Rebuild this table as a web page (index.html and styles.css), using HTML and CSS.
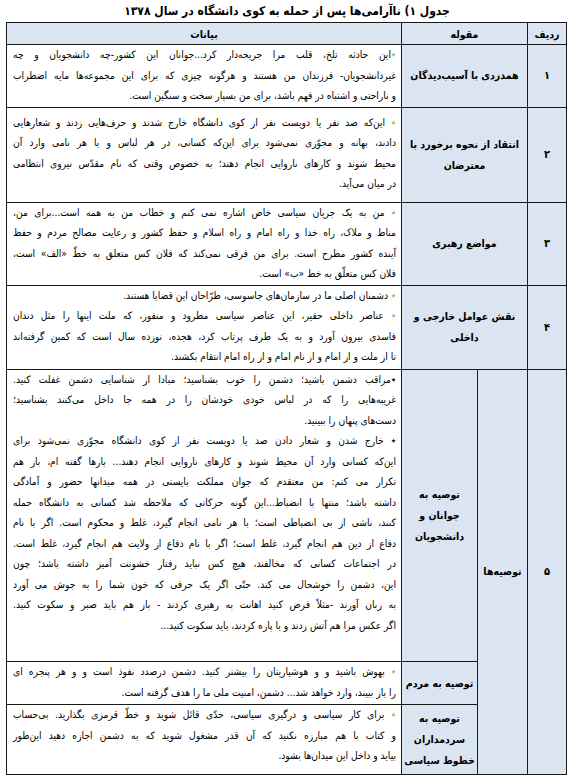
FILE: index.html
```html
<!DOCTYPE html>
<html lang="fa" dir="rtl">
<head>
<meta charset="utf-8">
<title>جدول ۱</title>
<link rel="stylesheet" href="styles.css">
</head>
<body>
<div class="page">
  <h1 class="title">جدول ۱) ناآرامی‌ها پس از حمله به کوی دانشگاه در سال ۱۳۷۸</h1>
  <table class="grid">
    <colgroup>
      <col class="c-num">
      <col class="c-cat">
      <col class="c-sub">
      <col class="c-text">
    </colgroup>
    <thead>
      <tr class="head">
        <th>ردیف</th>
        <th colspan="2">مقوله</th>
        <th>بیانات</th>
      </tr>
    </thead>
    <tbody>
      <tr>
        <td class="num">۱</td>
        <td class="cat" colspan="2">همدردی با آسیب‌دیدگان</td>
        <td class="txt">
          <span class="ln"><span class="star">٭</span>این حادثه تلخ، قلب مرا جریحه‌دار کرد...جوانان این کشور-چه دانشجویان و چه</span>
          <span class="ln">غیردانشجویان- فرزندان من هستند و هرگونه چیزی که برای این مجموعه‌ها مایه اضطراب</span>
          <span class="ln end">و ناراحتی و اشتباه در فهم باشد، برای من بسیار سخت و سنگین است.</span>
        </td>
      </tr>
      <tr>
        <td class="num">۲</td>
        <td class="cat" colspan="2">انتقاد از نحوه برخورد با<br>معترضان</td>
        <td class="txt pad2">
          <span class="ln"><span class="star">٭</span> این‌که صد نفر یا دویست نفر از کوی دانشگاه خارج شدند و حرف‌هایی زدند و شعارهایی</span>
          <span class="ln">دادند، بهانه و مجوّزی نمی‌شود برای این‌که کسانی، در هر لباس و با هر نامی وارد آن</span>
          <span class="ln">محیط شوند و کارهای ناروایی انجام دهند؛ به خصوص وقتی که نام مقدّس نیروی انتظامی</span>
          <span class="ln end">در میان می‌آید.</span>
        </td>
      </tr>
      <tr>
        <td class="num">۳</td>
        <td class="cat" colspan="2">مواضع رهبری</td>
        <td class="txt">
          <span class="ln"><span class="star">٭</span> من به یک جریان سیاسی خاص اشاره نمی کنم و خطاب من به همه است...برای من،</span>
          <span class="ln">مناط و ملاک، راه خدا و راه امام و راه اسلام و حفظ کشور و رعایت مصالح مردم و حفظ</span>
          <span class="ln">آینده کشور مطرح است. برای من فرقی نمی‌کند که فلان کس متعلق به خطّ «الف» است،</span>
          <span class="ln end">فلان کس متعلّق به خط «ب» است.</span>
        </td>
      </tr>
      <tr>
        <td class="num">۴</td>
        <td class="cat" colspan="2">نقش عوامل خارجی و<br>داخلی</td>
        <td class="txt pad4">
          <span class="ln end"><span class="star">٭</span> دشمنان اصلی ما در سازمان‌های جاسوسی، طرّاحان این قضایا هستند.</span>
          <span class="ln"><span class="star">٭</span> عناصر داخلی حقیر، این عناصر سیاسی مطرود و منفور، که ملت اینها را مثل دندان</span>
          <span class="ln">فاسدی بیرون آورد و به یک طرف پرتاب کرد، هجده، نوزده سال است که کمین گرفته‌اند</span>
          <span class="ln end">تا از ملت و از امام و از نام امام و از راه امام انتقام بکشند.</span>
        </td>
      </tr>
      <tr>
        <td class="num" rowspan="3">۵</td>
        <td class="cat" rowspan="3">توصیه‌ها</td>
        <td class="sub">توصیه به<br>جوانان و<br>دانشجویان</td>
        <td class="txt pad5">
          <span class="ln">٭مراقب دشمن باشید؛ دشمن را خوب بشناسید؛ مبادا از شناسایی دشمن غفلت کنید.</span>
          <span class="ln">غریبه‌هایی را که در لباس خودی خودشان را در همه جا داخل می‌کنند بشناسید؛</span>
          <span class="ln end">دست‌های پنهان را ببینید.</span>
          <span class="ln">٭ خارج شدن و شعار دادن صد یا دویست نفر از کوی دانشگاه مجوّزی نمی‌شود برای</span>
          <span class="ln">این‌که کسانی وارد آن محیط شوند و کارهای ناروایی انجام دهند... بارها گفته ام، باز هم</span>
          <span class="ln">تکرار می کنم: من معتقدم که جوان مملکت بایستی در همه میدانها حضور و آمادگی</span>
          <span class="ln">داشته باشد؛ منتها با انضباط...این گونه حرکاتی که ملاحظه شد کسانی به دانشگاه حمله</span>
          <span class="ln">کنند، ناشی از بی انضباطی است؛ با هر نامی انجام گیرد، غلط و محکوم است. اگر با نام</span>
          <span class="ln">دفاع از دین هم انجام گیرد، غلط است؛ اگر با نام دفاع از ولایت هم انجام گیرد، غلط است.</span>
          <span class="ln">در اجتماعات کسانی که مخالفند، هیچ کس نباید رفتار خشونت آمیز داشته باشد؛ چون</span>
          <span class="ln">این، دشمن را خوشحال می کند. حتّی اگر یک حرفی که خون شما را به جوش می آورد</span>
          <span class="ln">به زبان آورند -مثلاً فرض کنید اهانت به رهبری کردند - باز هم باید صبر و سکوت کنید.</span>
          <span class="ln end">اگر عکس مرا هم آتش زدند و یا پاره کردند، باید سکوت کنید...</span>
        </td>
      </tr>
      <tr>
        <td class="sub">توصیه به مردم</td>
        <td class="txt pad6">
          <span class="ln"><span class="star">٭</span> بهوش باشید و و هوشیاریتان را بیشتر کنید. دشمن درصدد نفوذ است و و هر پنجره ای</span>
          <span class="ln end">را باز ببیند، وارد خواهد شد... دشمن، امنیت ملی ما را هدف گرفته است.</span>
        </td>
      </tr>
      <tr>
        <td class="sub">توصیه به<br>سردمداران<br>خطوط سیاسی</td>
        <td class="txt pad7">
          <span class="ln"><span class="star">٭</span> برای کار سیاسی و درگیری سیاسی، حدّی قائل شوید و خطّ قرمزی بگذارید. بی‌حساب</span>
          <span class="ln">و کتاب با هم مبارزه نکنید که آن قدر مشغول شوید که به دشمن اجازه دهید این‌طور</span>
          <span class="ln end">بیاید و داخل این میدان‌ها بشود.</span>
        </td>
      </tr>
    </tbody>
  </table>
</div>
</body>
</html>
```

FILE: styles.css
```css
html, body {
  margin: 0;
  padding: 0;
  background: #ffffff;
}

.page {
  padding: 0 4px 0 7px;
  font-family: "DejaVu Sans Condensed", "DejaVu Sans", sans-serif;
  font-stretch: condensed;
  color: #000;
}

.title {
  margin: 0;
  height: 22px;
  line-height: 22px;
  font-size: 12px;
  font-weight: bold;
  text-align: center;
}

.grid {
  width: 560px;
  border-collapse: collapse;
  table-layout: fixed;
  font-size: 10.2px;
}

.c-num { width: 39px; }
.c-cat { width: 50px; }
.c-sub { width: 76px; }
.c-text { width: 395px; }

.grid th,
.grid td {
  border: 1px solid #1a1a1a;
  padding: 0;
}

.head th {
  background: #dbe5f1;
  height: 21px;
  font-weight: bold;
  font-size: 10.5px;
  text-align: center;
}

.num {
  background: #dbe5f1;
  text-align: center;
  font-weight: bold;
  font-size: 11px;
}

.cat,
.sub {
  background: #dbe5f1;
  text-align: center;
  font-weight: bold;
  font-size: 10.5px;
  line-height: 21px;
}

.txt {
  padding: 0 5px 0 6px !important;
  line-height: 20.5px;
  vertical-align: top;
}

.pad2 {
  padding-top: 5px !important;
  padding-bottom: 7px !important;
}

.pad4 {
  padding-bottom: 1px !important;
}

.pad5 {
  padding-bottom: 25px !important;
}

.pad6 {
  padding-bottom: 1px !important;
}

.pad7 {
  padding-bottom: 7px !important;
}

.ln {
  display: block;
  text-align: justify;
  text-align-last: justify;
}

.ln.end {
  text-align-last: start;
}

.star {
  color: #9bbb59;
}
```
